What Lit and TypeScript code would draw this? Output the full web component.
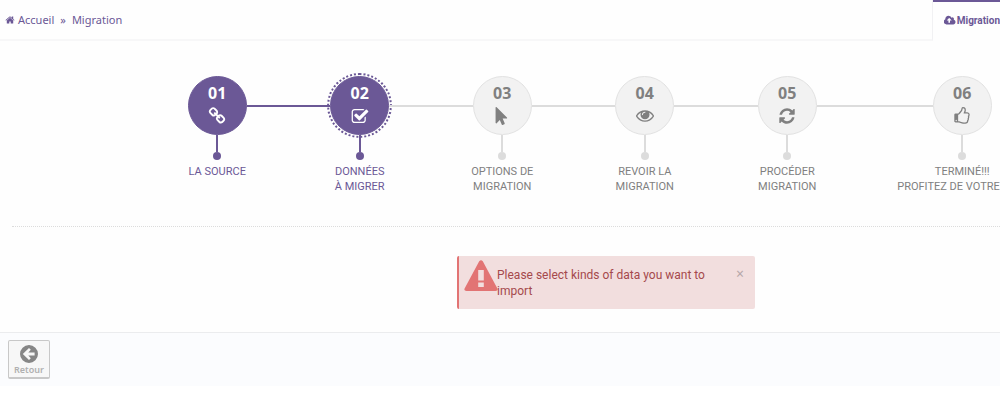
import { LitElement, html, css, svg } from "lit";
import { customElement } from "lit/decorators.js";
import { classMap } from "lit/directives/class-map.js";

const ICONS: Record<string, string> = {
  link: "M1520 1216q0-40-28-68l-208-208q-28-28-68-28-42 0-72 32 3 3 19 18.500t21.500 21.500 15 19 13 25.500 3.500 27.500q0 40-28 68t-68 28q-15 0-27.500-3.500t-25.500-13-19-15-21.500-21.500-18.500-19q-33 31-33 73 0 40 28 68l206 207q27 27 68 27 40 0 68-26l147-146q28-28 28-67zm-703-705q0-40-28-68l-206-207q-28-28-68-28-39 0-68 27l-147 146q-28 28-28 67 0 40 28 68l208 208q27 27 68 27 42 0 72-31-3-3-19-18.500t-21.500-21.500-15-19-13-25.500-3.500-27.500q0-40 28-68t68-28q15 0 27.500 3.500t25.500 13 19 15 21.500 21.500 18.500 19q33-31 33-73zm895 705q0 120-85 203l-147 146q-83 83-203 83-121 0-204-85l-206-207q-83-83-83-203 0-123 88-209l-88-88q-86 88-208 88-120 0-204-84l-208-208q-84-84-84-204t85-203l147-146q83-83 203-83 121 0 204 85l206 207q83 83 83 203 0 123-88 209l88 88q86-88 208-88 120 0 204 84l208 208q84 84 84 204z",
  check: "M1472 930v318q0 119-84.500 203.500t-203.500 84.500h-832q-119 0-203.500-84.500t-84.500-203.500v-832q0-119 84.500-203.500t203.500-84.500h832q63 0 117 25 15 7 18 23 3 17-9 29l-49 49q-10 10-23 10-3 0-9-2-23-6-45-6h-832q-66 0-113 47t-47 113v832q0 66 47 113t113 47h832q66 0 113-47t47-113v-254q0-13 9-22l64-64q10-10 23-10 6 0 12 3 20 8 20 29zm231-489l-814 814q-24 24-57 24t-57-24l-430-430q-24-24-24-57t24-57l110-110q24-24 57-24t57 24l263 263 647-647q24-24 57-24t57 24l110 110q24 24 24 57t-24 57z",
  pointer: "M1389 1043q31 30 14 69-17 40-59 40h-382l201 476q10 25 0 49t-34 35l-177 75q-25 10-49 0t-35-34l-191-452-312 312q-19 19-45 19-12 0-24-5-40-17-40-59v-1504q0-42 40-59 12-5 24-5 27 0 45 19z",
  eye: "M1664 960q-152-236-381-353 61 104 61 225 0 185-131.500 316.500t-316.500 131.500-316.500-131.500-131.500-316.500q0-121 61-225-229 117-381 353 133 205 333.500 326.500t434.500 121.500 434.500-121.500 333.500-326.500zm-720-384q0-20-14-34t-34-14q-125 0-214.500 89.500t-89.500 214.500q0 20 14 34t34 14 34-14 14-34q0-86 61-147t147-61q20 0 34-14t14-34zm848 384q0 34-20 69-140 230-376.500 368.500t-499.500 138.500-499.500-139-376.500-368q-20-35-20-69t20-69q140-229 376.500-368t499.500-139 499.500 139 376.500 368q20 35 20 69z",
  refresh: "M1639 1056q0 5-1 7-64 268-268 434.500t-478 166.500q-146 0-282.500-55t-243.500-157l-129 129q-19 19-45 19t-45-19-19-45v-448q0-26 19-45t45-19h448q26 0 45 19t19 45-19 45l-137 137q71 66 161 102t187 36q134 0 250-65t186-179q11-17 53-117 8-23 30-23h192q13 0 22.500 9.500t9.500 22.500zm25-800v448q0 26-19 45t-45 19h-448q-26 0-45-19t-19-45 19-45l138-138q-148-137-349-137-134 0-250 65t-186 179q-11 17-53 117-8 23-30 23h-199q-13 0-22.500-9.500t-9.500-22.500v-7q65-268 270-434.500t480-166.500q146 0 284 55.500t245 156.500l130-129q19-19 45-19t45 19 19 45z",
  thumb: "M256 1344q0-26-19-45t-45-19-45 19-19 45 19 45 45 19 45-19 19-45zm1152-576q0-51-39-89.500t-89-38.500h-352q0-58 48-159.500t48-160.500q0-98-32-145t-128-47q-26 26-38 85t-30.500 125.500-59.500 109.500q-22 23-77 91-4 5-23 30t-31.500 41-34.500 42.500-40 44-38.500 35.500-40 27-35.500 9h-32v640h32q13 0 31.500 3t33 6.500 38 11 35 11.500 35.500 12.500 29 10.500q211 73 342 73h121q192 0 192-167 0-26-5-56 30-16 47.500-52.500t17.500-73.500-18-69q53-50 53-119 0-25-10-55.500t-25-47.500q32-1 53.500-47t21.500-81zm128-1q0 89-49 163 9 33 9 69 0 77-38 144 3 21 3 43 0 101-60 178 1 139-85 219.500t-227 80.500h-129q-96 0-189.500-22.500t-216.500-65.500q-116-40-138-40h-288q-53 0-90.500-37.500t-37.500-90.500v-640q0-53 37.500-90.500t90.500-37.500h274q36-24 137-155 58-75 107-128 24-25 35.500-85.500t30.500-126.500 62-108q39-37 90-37 84 0 151 32.500t102 101.500 35 186q0 93-48 192h176q104 0 180 76t76 179z",
  home: "M1472 992v480q0 26-19 45t-45 19h-384v-384h-256v384h-384q-26 0-45-19t-19-45v-480q0-1 .5-3t.5-3l575-474 575 474q1 2 1 6zm223-69l-62 74q-8 9-21 11h-3q-13 0-21-7l-692-577-692 577q-12 8-24 7-13-2-21-11l-62-74q-8-10-7-23.500t11-21.500l719-599q32-26 76-26t76 26l244 204v-195q0-14 9-23t23-9h192q14 0 23 9t9 23v408l219 182q10 8 11 21.500t-7 23.500z",
  cloud: "M1216 864q0-14-9-23l-352-352q-9-9-23-9t-23 9l-351 351q-10 12-10 24 0 14 9 23t23 9h224v352q0 13 9.500 22.500t22.500 9.500h192q13 0 22.500-9.500t9.500-22.500v-352h224q13 0 22.500-9.500t9.500-22.500zm640 288q0 159-112.500 271.500t-271.500 112.500h-1088q-185 0-316.500-131.500t-131.500-316.500q0-130 70-240t188-165q-2-30-2-43 0-212 150-362t362-150q156 0 285.500 87t188.500 231q71-62 166-62 106 0 181 75t75 181q0 76-41 138 130 31 213.500 135.500t83.500 238.500z",
};

const BOXES: Record<string, string> = {
  cloud: "0 0 1920 1792",
  thumb: "-128 0 1792 1792",
  check: "0 -64 1792 1792",
  eye: "0 64 1792 1792",
};

const icon = (name: string, cls = "icon") => html`
  <svg class=${cls} viewBox=${BOXES[name] ?? "0 0 1792 1792"} aria-hidden="true">
    ${svg`<path d=${ICONS[name]}></path>`}
  </svg>`;

interface Step {
  num: string;
  icon: string;
  lines: string[];
  done?: boolean;
  current?: boolean;
}

const STEPS: Step[] = [
  { num: "01", icon: "link", lines: ["LA SOURCE"], done: true },
  { num: "02", icon: "check", lines: ["DONNÉES", "À MIGRER"], done: true, current: true },
  { num: "03", icon: "pointer", lines: ["OPTIONS DE", "MIGRATION"] },
  { num: "04", icon: "eye", lines: ["REVOIR LA", "MIGRATION"] },
  { num: "05", icon: "refresh", lines: ["PROCÉDER", "MIGRATION"] },
  { num: "06", icon: "thumb", lines: ["TERMINÉ!!!", "PROFITEZ DE VOTRE"] },
];

@customElement("app-root")
export class AppRoot extends LitElement {
  static styles = css`
    :host {
      display: block;
      overflow: hidden;
      background: #fefefe;
      color: #6b5896;
      font: 11px/16px "Noto Sans", sans-serif;
    }
    * { box-sizing: border-box; }
    svg { display: block; fill: currentColor; flex: none; }
    a { color: inherit; text-decoration: none; }

    .top { display: flex; height: 41px; }
    .crumbs {
      flex: 1;
      display: flex;
      align-items: center;
      gap: 6px;
      padding-left: 5px;
      border-bottom: 2px solid #f7f7f8;
      border-right: 1px solid #f1f1f3;
    }
    .home { display: flex; align-items: center; gap: 3px; }
    .small { width: 10px; height: 10px; }
    .cloud { width: 12px; height: 11px; }
    .tab {
      flex: none;
      display: flex;
      align-items: center;
      gap: 1px;
      padding: 0 0 2px 11px;
      border-top: 2px solid #6b5896;
      font-family: Roboto, sans-serif;
      font-size: 10px;
      font-weight: 700;
      white-space: nowrap;
    }

    .steps {
      display: grid;
      grid-template-columns: repeat(5, 285fr) 415fr;
      margin: 0 -66px 0 146px;
      padding: 35px 0 32px;
      list-style: none;
    }
    .step {
      display: flex;
      flex-direction: column;
      align-items: center;
      color: #808080;
      --line: #dcdcdc;
    }
    .step.done { color: #6b5896; --line: #6b5896; }
    .row { display: flex; align-items: center; align-self: stretch; }
    .bar { flex: 1; height: 2px; background: #dcdcdc; }
    .bar.on { background: #6b5896; }
    .bar.off { background: none; }
    .disc {
      width: 59px;
      height: 59px;
      border-radius: 50%;
      border: 1px solid #e2e2e2;
      background: #f2f2f2;
      display: flex;
      flex-direction: column;
      align-items: center;
      padding-top: 6px;
      gap: 4px;
    }
    .done .disc { background: #6b5896; border-color: #6b5896; color: #fff; }
    .current .disc {
      outline: 2px dotted #6b5896;
      outline-offset: 1px;
    }
    .num { font-size: 16px; line-height: 20px; font-weight: 700; }
    .icon { width: 18px; height: 18px; }
    .stem { width: 2px; height: 17px; background: var(--line); }
    .dot { width: 8px; height: 8px; border-radius: 50%; background: var(--line); }
    .label {
      display: flex;
      flex-direction: column;
      align-items: center;
      min-height: 30px;
      margin-top: 4px;
      font-family: Roboto, sans-serif;
      font-size: 11px;
      line-height: 15px;
      white-space: nowrap;
    }
    .step:last-child .label { width: 130px; }
    .step:last-child .second { align-self: flex-start; }

    .rule { margin-left: 12px; border-top: 1px dotted #dcdcdc; }

    .alert {
      display: flex;
      align-items: flex-start;
      width: 298px;
      max-width: 100%;
      margin: 29px 245px 23px auto;
      padding: 4px 11px 10px 5px;
      border-left: 2px solid #e27474;
      border-radius: 2px;
      background: #f2dede;
      color: #a5494c;
    }
    .warn { width: 34px; height: 32px; margin-right: -1px; color: #e27474; }
    .msg {
      flex: 1;
      margin: 7px 0 0;
      padding-right: 24px;
      font-family: Roboto, sans-serif;
      font-size: 12px;
    }
    .close, .back {
      font: inherit;
      cursor: pointer;
    }
    .close {
      border: 0;
      padding: 0;
      margin-top: 6px;
      background: none;
      color: #b5a7a8;
      font-size: 14px;
      line-height: 16px;
    }

    .foot {
      padding: 7px 8px;
      border-top: 1px solid #ebecee;
      background: #fbfcfe;
    }
    .back {
      display: flex;
      flex-direction: column;
      align-items: center;
      width: 42px;
      padding: 3px 0 1px;
      border: 1px solid #c8c8c8;
      border-bottom-width: 2px;
      border-radius: 2px;
      background: #f7f7f7;
      color: #b0b0b0;
      font-size: 9px;
      font-weight: 600;
      line-height: 12px;
    }
    .arrow { width: 20px; height: 20px; color: #868686; }
  `;

  private renderStep(step: Step, i: number) {
    const next = STEPS[i + 1];
    return html`
      <li class=${classMap({ step: true, done: !!step.done, current: !!step.current })}>
        <div class="row">
          <span class=${classMap({ bar: true, on: !!step.done, off: i === 0 })}></span>
          <div class="disc">
            <span class="num">${step.num}</span>
            ${icon(step.icon)}
          </div>
          <span class=${classMap({ bar: true, on: !!next?.done, off: !next })}></span>
        </div>
        <span class="stem"></span>
        <span class="dot"></span>
        <div class="label">
          ${step.lines.map((l, n) => html`<span class=${n ? "second" : "first"}>${l}</span>`)}
        </div>
      </li>`;
  }

  render() {
    return html`
      <header class="top">
        <nav class="crumbs">
          <a class="home" href="#">${icon("home", "small")}Accueil</a>
          <span>»</span>
          <a href="#">Migration</a>
        </nav>
        <a class="tab" href="#">${icon("cloud", "cloud")}Migration</a>
      </header>
      <main>
        <ol class="steps">${STEPS.map((s, i) => this.renderStep(s, i))}</ol>
        <div class="rule"></div>
        <div class="alert" role="alert">
          <svg class="warn" viewBox="0 0 34 32" aria-hidden="true">
            <path fill-rule="evenodd" d="M15.200 1.300Q17 -.6 18.800 1.300L33.400 28.500Q34.400 31 31.500 31H2.500Q-.4 31 .6 28.500ZM14.200 10V20.500H19.800V10ZM14.200 22.500V27H19.800V22.500Z"></path>
          </svg>
          <p class="msg">Please select kinds of data you want to import</p>
          <button class="close" type="button" aria-label="Close">×</button>
        </div>
      </main>
      <footer class="foot">
        <button class="back" type="button">
          <svg class="arrow" viewBox="0 0 20 20" aria-hidden="true">
            <path fill-rule="evenodd" d="M10 1a9 9 0 1 0 0 18a9 9 0 0 0 0-18ZM3.800 10L10 3.900L11.800 5.700L9.300 8.400H15.600V11.600H9.300L11.800 14.300L10 16.100Z"></path>
          </svg>
          Retour
        </button>
      </footer>`;
  }
}
